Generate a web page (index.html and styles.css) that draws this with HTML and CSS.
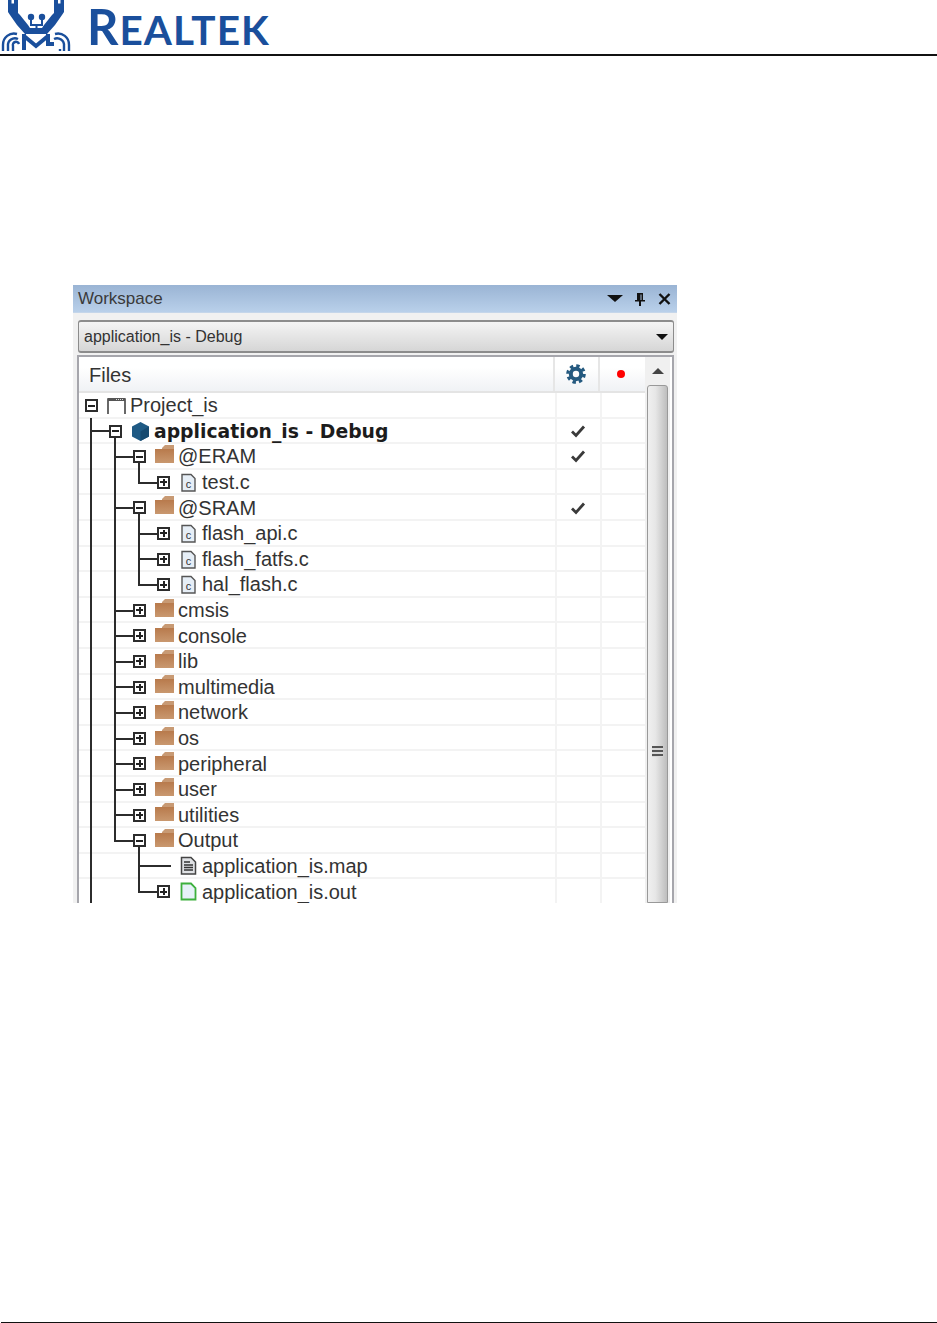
FILE: index.html
```html
<!DOCTYPE html>
<html lang="en">
<head>
<meta charset="utf-8">
<title>Realtek workspace</title>
<link rel="stylesheet" href="styles.css">
</head>
<body>
<svg class="defs" width="0" height="0" aria-hidden="true">
  <symbol id="folder" viewBox="0 0 19 19">
    <path d="M7 3 L10 0 H19 V5 H7Z" fill="#c89a74"/>
    <rect x="0" y="4" width="19" height="14" fill="url(#fg)"/>
    <linearGradient id="fg" x1="0" y1="0" x2="0" y2="1"><stop offset="0" stop-color="#b87a4c"/><stop offset="1" stop-color="#c9986f"/></linearGradient>
  </symbol>
  <symbol id="check" viewBox="0 0 16 14">
    <path d="M2 7.5 L6 11.5 L14 2.5" fill="none" stroke="#3a3a3a" stroke-width="2.8"/>
  </symbol>
  <symbol id="doc" viewBox="0 0 19 19">
    <path d="M2.5 1.5 H12 L16.5 6 V18 H2.5Z" fill="#dfe1e4" stroke="#444" stroke-width="1.5"/>
    <path d="M5 6H11M5 9H14M5 11.5H14M5 14H14" stroke="#333" stroke-width="1.3"/>
  </symbol>
  <symbol id="out" viewBox="0 0 19 19">
    <path d="M2.5 1.5 H12 L16.5 6 V17.5 H2.5Z" fill="#e6f1f8" stroke="#3db03d" stroke-width="1.8"/>
  </symbol>
  <symbol id="hex" viewBox="0 0 19 19">
    <path d="M9.5 0 L18 4.5 V14.5 L9.5 19 L1 14.5 V4.5Z" fill="#1f5a84"/>
    <path d="M9.5 9.5 L18 4.5 V14.5 L9.5 19Z" fill="#174a70"/>
  </symbol>
</svg>

<header class="page-head">
  <svg class="logo" viewBox="0 0 72 54" aria-hidden="true">
    <path fill="#1a4f9c" d="M8 0H11.5V3.5H14V0H18V13L20 15L28 25L30 28H42L44 25L52 15L54 13V0H58V3.5H60.5V0H64V12L62 15L55 25L47 34H25L17 25L10 15L8 12Z"/>
    <circle cx="31" cy="17" r="3.2" fill="#1a4f9c"/>
    <circle cx="42" cy="17" r="3.2" fill="#1a4f9c"/>
    <path d="M31 18V25H42V18M36.5 25V29" fill="none" stroke="#1a4f9c" stroke-width="2"/>
    <path fill="none" stroke="#1a4f9c" stroke-width="4" d="M24 50V34M24 36L36 46L48 36M48 34V44H54"/>
    <g fill="none" stroke="#1a4f9c" stroke-width="2.4">
      <path d="M3 51V45A11 11 0 0 1 17 34"/>
      <path d="M8 51V46A7 7 0 0 1 18 39"/>
      <path d="M13 51V46A3 3 0 0 1 19 44"/>
      <path d="M69 51V45A11 11 0 0 0 55 34"/>
      <path d="M64 51V46A7 7 0 0 0 54 39"/>
      <path d="M60 51V49"/>
    </g>
  </svg>
  <div class="brand"><span class="brand-cap">R</span>EALTEK</div>
</header>

<main class="page-body">
  <section class="panel">
    <div class="title">
      <span class="title-text">Workspace</span>
      <svg class="t-icon t-drop" viewBox="0 0 16 7"><path d="M0 0H16L8 7Z" fill="#111"/></svg>
      <svg class="t-icon t-pin" viewBox="0 0 12 14"><path d="M3 1H9V8H11V9.5H7V14H5V9.5H1V8H3ZM6.5 2.5V8H7.5V2.5Z" fill="#111"/></svg>
      <svg class="t-icon t-close" viewBox="0 0 13 12"><path d="M1.5 1L11.5 11M11.5 1L1.5 11" stroke="#111" stroke-width="2.4"/></svg>
    </div>
    <div class="combo">
      <span>application_is - Debug</span>
      <svg class="combo-arrow" viewBox="0 0 12 6"><path d="M0 0H12L6 6Z" fill="#111"/></svg>
    </div>
    <div class="frame">
      <div class="grid">
        <div class="head">
          <div class="head-name">Files</div>
          <div class="head-col">
            <svg class="gear" viewBox="0 0 20 20"><circle cx="10" cy="10" r="8.2" fill="none" stroke="#24597f" stroke-width="3.2" stroke-dasharray="3.4 3.04"/><circle cx="10" cy="10" r="5.2" fill="none" stroke="#24597f" stroke-width="4"/></svg>
          </div>
          <div class="head-col"><span class="dot"></span></div>
        </div>

        <div class="row">
          <div class="tree"><i class="g box minus"></i><svg class="ico" viewBox="0 0 19 19"><path d="M1 18V3H18V18" fill="none" stroke="#444" stroke-width="1.6"/><path d="M1 2H18V5H1Z" fill="#555"/><path d="M9 3.5H17" stroke="#ddd" stroke-dasharray="1 1"/></svg><span class="name">Project_is</span></div>
          <div class="c"></div><div class="c"></div>
        </div>
        <div class="row">
          <div class="tree"><i class="g tee"></i><i class="g box minus down"></i><svg class="ico"><use href="#hex"/></svg><span class="name bold">application_is - Debug</span></div>
          <div class="c"><svg class="check"><use href="#check"/></svg></div><div class="c"></div>
        </div>
        <div class="row">
          <div class="tree"><i class="g v"></i><i class="g tee"></i><i class="g box minus down"></i><svg class="ico folder"><use href="#folder"/></svg><span class="name">@ERAM</span></div>
          <div class="c"><svg class="check"><use href="#check"/></svg></div><div class="c"></div>
        </div>
        <div class="row">
          <div class="tree"><i class="g v"></i><i class="g v"></i><i class="g elbow"></i><i class="g box plus"></i><svg class="ico" viewBox="0 0 19 19"><path d="M3 1.5H12L16 5.5V18H3Z" fill="#e6eef6" stroke="#555" stroke-width="1.4"/><text class="file-c" x="9.5" y="15" text-anchor="middle">c</text></svg><span class="name">test.c</span></div>
          <div class="c"></div><div class="c"></div>
        </div>
        <div class="row">
          <div class="tree"><i class="g v"></i><i class="g tee"></i><i class="g box minus down"></i><svg class="ico folder"><use href="#folder"/></svg><span class="name">@SRAM</span></div>
          <div class="c"><svg class="check"><use href="#check"/></svg></div><div class="c"></div>
        </div>
        <div class="row">
          <div class="tree"><i class="g v"></i><i class="g v"></i><i class="g tee"></i><i class="g box plus"></i><svg class="ico" viewBox="0 0 19 19"><path d="M3 1.5H12L16 5.5V18H3Z" fill="#e6eef6" stroke="#555" stroke-width="1.4"/><text class="file-c" x="9.5" y="15" text-anchor="middle">c</text></svg><span class="name">flash_api.c</span></div>
          <div class="c"></div><div class="c"></div>
        </div>
        <div class="row">
          <div class="tree"><i class="g v"></i><i class="g v"></i><i class="g tee"></i><i class="g box plus"></i><svg class="ico" viewBox="0 0 19 19"><path d="M3 1.5H12L16 5.5V18H3Z" fill="#e6eef6" stroke="#555" stroke-width="1.4"/><text class="file-c" x="9.5" y="15" text-anchor="middle">c</text></svg><span class="name">flash_fatfs.c</span></div>
          <div class="c"></div><div class="c"></div>
        </div>
        <div class="row">
          <div class="tree"><i class="g v"></i><i class="g v"></i><i class="g elbow"></i><i class="g box plus"></i><svg class="ico" viewBox="0 0 19 19"><path d="M3 1.5H12L16 5.5V18H3Z" fill="#e6eef6" stroke="#555" stroke-width="1.4"/><text class="file-c" x="9.5" y="15" text-anchor="middle">c</text></svg><span class="name">hal_flash.c</span></div>
          <div class="c"></div><div class="c"></div>
        </div>
        <div class="row"><div class="tree"><i class="g v"></i><i class="g tee"></i><i class="g box plus"></i><svg class="ico folder"><use href="#folder"/></svg><span class="name">cmsis</span></div><div class="c"></div><div class="c"></div></div>
        <div class="row"><div class="tree"><i class="g v"></i><i class="g tee"></i><i class="g box plus"></i><svg class="ico folder"><use href="#folder"/></svg><span class="name">console</span></div><div class="c"></div><div class="c"></div></div>
        <div class="row"><div class="tree"><i class="g v"></i><i class="g tee"></i><i class="g box plus"></i><svg class="ico folder"><use href="#folder"/></svg><span class="name">lib</span></div><div class="c"></div><div class="c"></div></div>
        <div class="row"><div class="tree"><i class="g v"></i><i class="g tee"></i><i class="g box plus"></i><svg class="ico folder"><use href="#folder"/></svg><span class="name">multimedia</span></div><div class="c"></div><div class="c"></div></div>
        <div class="row"><div class="tree"><i class="g v"></i><i class="g tee"></i><i class="g box plus"></i><svg class="ico folder"><use href="#folder"/></svg><span class="name">network</span></div><div class="c"></div><div class="c"></div></div>
        <div class="row"><div class="tree"><i class="g v"></i><i class="g tee"></i><i class="g box plus"></i><svg class="ico folder"><use href="#folder"/></svg><span class="name">os</span></div><div class="c"></div><div class="c"></div></div>
        <div class="row"><div class="tree"><i class="g v"></i><i class="g tee"></i><i class="g box plus"></i><svg class="ico folder"><use href="#folder"/></svg><span class="name">peripheral</span></div><div class="c"></div><div class="c"></div></div>
        <div class="row"><div class="tree"><i class="g v"></i><i class="g tee"></i><i class="g box plus"></i><svg class="ico folder"><use href="#folder"/></svg><span class="name">user</span></div><div class="c"></div><div class="c"></div></div>
        <div class="row"><div class="tree"><i class="g v"></i><i class="g tee"></i><i class="g box plus"></i><svg class="ico folder"><use href="#folder"/></svg><span class="name">utilities</span></div><div class="c"></div><div class="c"></div></div>
        <div class="row"><div class="tree"><i class="g v"></i><i class="g elbow"></i><i class="g box minus down"></i><svg class="ico folder"><use href="#folder"/></svg><span class="name">Output</span></div><div class="c"></div><div class="c"></div></div>
        <div class="row"><div class="tree"><i class="g v"></i><i class="g"></i><i class="g tee"></i><i class="g dash"></i><svg class="ico lift"><use href="#doc"/></svg><span class="name">application_is.map</span></div><div class="c"></div><div class="c"></div></div>
        <div class="row"><div class="tree"><i class="g v"></i><i class="g"></i><i class="g elbow"></i><i class="g box plus"></i><svg class="ico lift"><use href="#out"/></svg><span class="name">application_is.out</span></div><div class="c"></div><div class="c"></div></div>
        <div class="row"><div class="tree"><i class="g v"></i></div><div class="c"></div><div class="c"></div></div>
      </div>
      <div class="scroll">
        <div class="scroll-up"><svg class="scroll-arrow" viewBox="0 0 12 6"><path d="M6 0L12 6H0Z" fill="#444"/></svg></div>
        <div class="thumb"><span class="grip"></span></div>
      </div>
    </div>
  </section>
</main>

<footer class="page-foot"></footer>
</body>
</html>
```

FILE: styles.css
```css
*, *::before, *::after { box-sizing: border-box; }
html, body { margin: 0; padding: 0; }
body {
  width: 937px;
  height: 1323px;
  display: flex;
  flex-direction: column;
  background: #fff;
  font-family: "Liberation Sans", Arial, sans-serif;
  overflow: hidden;
}
.defs { position: absolute; }

.page-head {
  height: 56px;
  flex: none;
  display: flex;
  align-items: flex-start;
  border-bottom: 2px solid #111;
}
.logo { width: 72px; height: 54px; flex: none; }
.brand {
  margin-left: 15px;
  font-family: Lato, "Liberation Sans", sans-serif;
  font-weight: 700;
  font-size: 40.5px;
  line-height: 52px;
  color: #1a4f9c;
  letter-spacing: 1px;
  white-space: nowrap;
}
.brand-cap { font-size: 49px; }

.page-body { flex: 1; padding: 229px 0 0 73px; }
.page-foot { height: 1px; margin-left: 1px; flex: none; background: #111; }

.panel {
  width: 604px;
  height: 618px;
  overflow: hidden;
  display: flex;
  flex-direction: column;
  background: #f1f1f1;
}
.title {
  height: 28px;
  flex: none;
  display: flex;
  align-items: center;
  padding-left: 5px;
  background: linear-gradient(#9ab4d4, #b9d0ea);
  border-bottom: 1px solid #c5d6ea;
  color: #3a3a3a;
  font-size: 17px;
}
.title-text { flex: 1; }
.t-icon { flex: none; display: block; }
.t-drop { width: 16px; height: 7px; margin-right: 11px; }
.t-pin { width: 12px; height: 14px; margin-right: 12px; }
.t-close { width: 13px; height: 12px; margin-right: 6px; }

.combo {
  height: 33px;
  flex: none;
  margin: 7px 3px 0 5px;
  display: flex;
  align-items: center;
  justify-content: space-between;
  padding: 0 5px 0 5px;
  border: 1px solid #8c8c8c;
  border-top-width: 2px;
  border-bottom-width: 2px;
  border-radius: 3px;
  background: linear-gradient(#f4f4f4, #d6d6d6);
  color: #333;
  font-size: 16px;
}
.combo-arrow { width: 12px; height: 6px; flex: none; }

.frame {
  flex: 1;
  margin: 2px 3px 0 4px;
  display: flex;
  border: 2px solid #a6a6ac;
  border-bottom: 0;
  background: #fff;
  min-height: 0;
}
.grid { width: 566px; flex: none; }
.head {
  height: 36px;
  display: flex;
  border-bottom: 2px solid #e4e4e4;
  background: linear-gradient(#fff 30%, #f0f2f5);
}
.head-name {
  width: 476px;
  padding-left: 10px;
  line-height: 37px;
  font-size: 20px;
  color: #333;
  border-right: 2px solid #e6e6e6;
}
.head-col {
  width: 45px;
  display: flex;
  align-items: center;
  justify-content: center;
  border-right: 2px solid #e6e6e6;
  padding-bottom: 1px;
}
.head-col:last-child { border-right: 0; }
.gear { width: 20px; height: 20px; margin-right: 2px; }
.dot { width: 8px; height: 8px; border-radius: 50%; background: #f00; margin-right: 3px; }

.row {
  height: 25.6px;
  display: flex;
  box-shadow: inset 0 -2px 0 #f3f3f3;
}
.tree {
  width: 476px;
  flex: none;
  display: flex;
  align-items: center;
  height: 100%;
}
.c {
  width: 45px;
  flex: none;
  display: flex;
  align-items: center;
  justify-content: center;
  box-shadow: inset 2px 0 0 #f3f3f3;
  padding-bottom: 1px;
}
.check { width: 16px; height: 14px; margin-left: 1px; }

.g {
  position: relative;
  display: block;
  width: 24px;
  height: 100%;
  flex: none;
}
.v::before, .tee::before, .elbow::before {
  content: "";
  position: absolute;
  left: 11px;
  top: -1px;
  width: 2px;
  bottom: -1px;
  background: #2c2c2c;
}
.elbow::before { bottom: 11.8px; }
.tee::after, .elbow::after {
  content: "";
  position: absolute;
  left: 11px;
  right: 0;
  top: 11.8px;
  height: 2px;
  background: #2c2c2c;
}
.dash::before {
  content: "";
  position: absolute;
  left: 0;
  width: 20px;
  top: 11.8px;
  height: 2px;
  background: #2c2c2c;
}
.box::before {
  content: "";
  position: absolute;
  left: 6px;
  top: 6px;
  width: 13px;
  height: 13px;
  border: 2px solid #2c2c2c;
  background: #fff;
  z-index: 1;
}
.box { background: linear-gradient(#2c2c2c, #2c2c2c) 0 11.8px / 6px 2px no-repeat; }
.g.box:first-child { background: none; }
.down {
  background:
    linear-gradient(#2c2c2c, #2c2c2c) 0 11.8px / 6px 2px no-repeat,
    linear-gradient(#2c2c2c, #2c2c2c) 11px 14px / 2px 12px no-repeat;
}
.minus::after, .plus::after {
  content: "";
  position: absolute;
  z-index: 2;
  left: 9px;
  top: 11.8px;
  width: 7px;
  height: 2px;
  background: #222;
}
.plus::after {
  background:
    linear-gradient(#222, #222) 0 2.5px / 7px 2px no-repeat,
    linear-gradient(#222, #222) 2.5px 0 / 2px 7px no-repeat;
  top: 9px;
  height: 7px;
}
.ico { width: 19px; height: 19px; margin: 0 4px; flex: none; }
.ico.folder { margin-top: -5px; }
.ico.lift { margin-top: -2px; }
.file-c { font-family: "Liberation Sans", sans-serif; font-size: 11px; fill: #333; }
.name { font-size: 20px; color: #333; white-space: nowrap; }
.name.bold { font-family: "DejaVu Sans", sans-serif; font-weight: 700; font-size: 18.8px; color: #1c1c1c; }

.scroll {
  width: 25px;
  flex: none;
  background: #f0f0f0;
  padding: 0 2px 0 2px;
  display: flex;
  flex-direction: column;
}
.scroll-up {
  height: 28px;
  flex: none;
  display: flex;
  align-items: center;
  justify-content: center;
}
.scroll-arrow { width: 12px; height: 6px; }
.thumb {
  flex: 1;
  position: relative;
  border: 1px solid #999;
  border-radius: 3px 3px 0 0;
  background: linear-gradient(90deg, #f0f0f0, #e6e6e6 40%, #bdbdbd);
  display: flex;
  justify-content: center;
  padding-top: 360px;
}
.grip {
  width: 11px;
  height: 11px;
  background: repeating-linear-gradient(#555 0 2px, #d8d8d8 2px 4px);
}
```
